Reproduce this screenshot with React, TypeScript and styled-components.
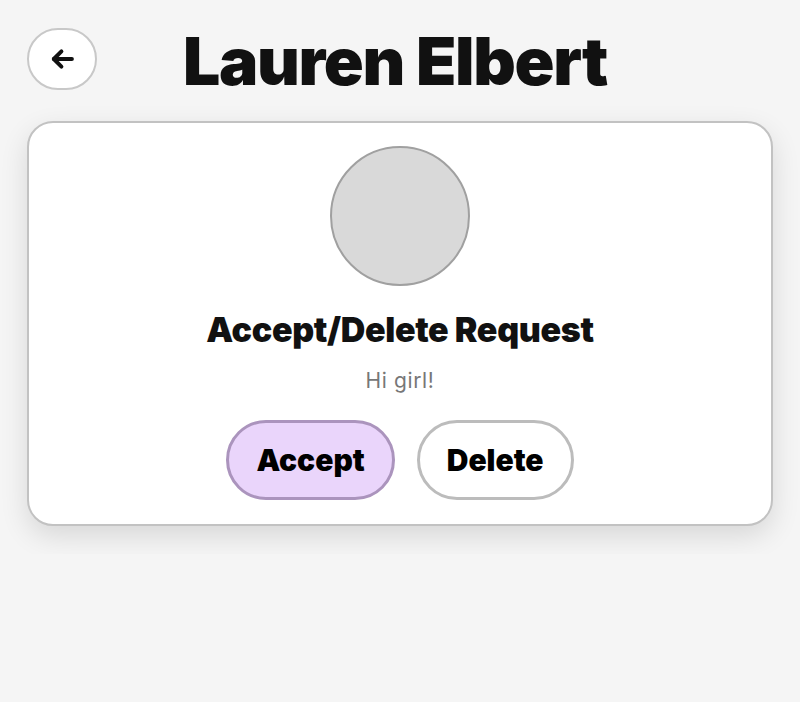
import { createGlobalStyle, styled } from 'styled-components'

const GlobalStyle = createGlobalStyle`
  html, body {
    margin: 0;
    padding: 0;
    background: #f5f5f5;
    font-family: Inter, "Noto Sans", sans-serif;
  }
`

const Page = styled.div`
  padding: 28px 27px;
  display: flex;
  flex-direction: column;
  gap: 31px;
`

const Header = styled.div`
  height: 62px;
  display: flex;
  align-items: center;
  gap: 86px;
`

const BackButton = styled.button`
  width: 70px;
  height: 62px;
  border-radius: 31px;
  border: 2px solid #c8c8c8;
  background: #fff;
  display: flex;
  align-items: center;
  justify-content: center;
  padding: 0;
  flex-shrink: 0;
  cursor: pointer;
`

const Title = styled.h1`
  margin: 0;
  padding-top: 4px;
  font-size: 66px;
  font-weight: 900;
  letter-spacing: -0.02em;
  line-height: 64px;
  color: #111;
  white-space: nowrap;
`

const Card = styled.div`
  background: #fff;
  border: 2px solid #c2c2c2;
  border-radius: 26px;
  box-shadow: 0 10px 28px rgba(0, 0, 0, 0.12);
  padding: 23px 24px 24px;
  display: flex;
  flex-direction: column;
  align-items: center;
`

const Avatar = styled.div`
  width: 136px;
  height: 136px;
  border-radius: 50%;
  background: #d9d9d9;
  border: 2px solid #a0a0a0;
`

const Heading = styled.h2`
  margin: 24px 0 0;
  font-size: 34px;
  font-weight: 900;
  letter-spacing: -0.01em;
  color: #111;
  line-height: 40px;
`

const Message = styled.p`
  margin: 19px 0 0;
  font-size: 21px;
  letter-spacing: 0.03em;
  color: #777;
  line-height: 24px;
`

const Actions = styled.div`
  margin-top: 27px;
  display: flex;
  gap: 22px;
`

const Pill = styled.button<{ $primary?: boolean }>`
  height: 80px;
  padding: 0 27px;
  border-radius: 40px;
  border: 3px solid ${(p) => (p.$primary ? '#ab94bd' : '#bcbcbc')};
  background: ${(p) => (p.$primary ? '#ead5fb' : '#fff')};
  font-family: Inter, "Noto Sans", sans-serif;
  font-size: 30px;
  font-weight: 900;
  color: #000;
  cursor: pointer;
`

export default function App() {
  return (
    <>
      <GlobalStyle />
      <Page>
        <Header>
          <BackButton aria-label="Back">
            <svg width="28" height="28" viewBox="0 0 24 24" fill="none" stroke="#111" strokeWidth="3.4" strokeLinecap="round" strokeLinejoin="round">
              <path d="M20.5 12H5" />
              <path d="M11.5 5.5L5 12l6.5 6.5" />
            </svg>
          </BackButton>
          <Title>Lauren Elbert</Title>
        </Header>
        <Card>
          <Avatar />
          <Heading>Accept/Delete Request</Heading>
          <Message>Hi girl!</Message>
          <Actions>
            <Pill $primary>Accept</Pill>
            <Pill>Delete</Pill>
          </Actions>
        </Card>
      </Page>
    </>
  )
}
